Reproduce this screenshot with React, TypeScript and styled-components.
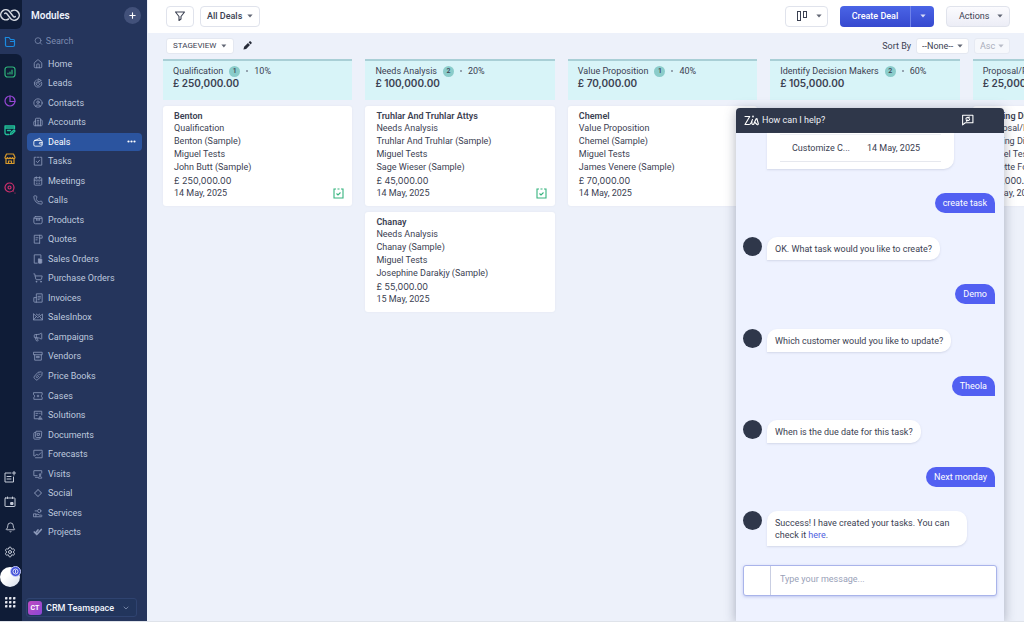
import React from 'react';
import styled, { createGlobalStyle, css } from 'styled-components';
import {
  Bell,
  Building2,
  CalendarDays,
  ChevronDown,
  CircleUser,
  Goal,
  House,
  Megaphone,
  Phone,
  Plus,
  Search,
  Settings,
  ShoppingCart,
} from 'lucide-react';

const GlobalStyle = createGlobalStyle`
  *, *::before, *::after { box-sizing: border-box; }
  body { margin: 0; background: #edf1fa; }
  body, button, input, select {
    font-family: Roboto, 'Liberation Sans', sans-serif;
    font-size: 9px;
    color: #3b4152;
  }
  button { cursor: pointer; }
  ul, ol, h1, h2, h3, p { margin: 0; padding: 0; list-style: none; }
`;

/* ---------- page frame ---------- */

const Page = styled.div`
  display: flex;
  height: 100vh;
  min-height: 560px;
  border-bottom: 1px solid #dfe3ea;
  overflow: hidden;
`;

const Rail = styled.nav`
  flex: none;
  display: flex;
  flex-direction: column;
  width: 22px;
  background: #25355c;
`;

const RailLogo = styled.div`
  display: flex;
  align-items: center;
  justify-content: center;
  height: 29px;
  padding-right: 2px;
  background: #0f1c37;
  border-bottom-right-radius: 6px;
`;

const RailActive = styled.a`
  display: flex;
  align-items: center;
  justify-content: center;
  height: 25px;
  padding-right: 2px;
  color: #1b8ae0;
`;

const RailRest = styled.div`
  flex: 1;
  display: flex;
  flex-direction: column;
  justify-content: space-between;
  padding: 12px 2px 9px 0;
  background: #0f1c37;
  border-top-right-radius: 6px;
`;

const RailGroup = styled.div<{ $gap: number }>`
  display: flex;
  flex-direction: column;
  align-items: center;
  gap: ${(p) => p.$gap}px;
`;

const RailButton = styled.button<{ $size: number; $color: string }>`
  display: flex;
  align-items: center;
  justify-content: center;
  width: 20px;
  height: ${(p) => p.$size}px;
  padding: 0;
  border: 0;
  background: none;
  color: ${(p) => p.$color};
`;

const Avatar = styled.button`
  position: relative;
  width: 20px;
  height: 20px;
  padding: 0;
  border: 0;
  border-radius: 50%;
  background: linear-gradient(135deg, #ffffff 40%, #d3dbea);
`;

const AvatarBadge = styled.span`
  position: absolute;
  top: -1px;
  right: -1px;
  display: flex;
  align-items: center;
  justify-content: center;
  width: 11px;
  height: 11px;
  border: 1px solid #c7cdfa;
  border-radius: 50%;
  background: #4150d8;
`;

/* ---------- module list ---------- */

const Sidebar = styled.aside`
  flex: none;
  display: flex;
  flex-direction: column;
  width: 125px;
  padding-bottom: 4px;
  background: #25355c;
`;

const SidebarHead = styled.header`
  display: flex;
  align-items: center;
  justify-content: space-between;
  height: 30px;
  padding: 0 6px 0 9px;
`;

const SidebarTitle = styled.h1`
  font-size: 10px;
  font-weight: 600;
  color: #eef2fb;
`;

const AddButton = styled.button`
  display: flex;
  align-items: center;
  justify-content: center;
  width: 17px;
  height: 17px;
  padding: 0;
  border: 0;
  border-radius: 50%;
  background: #42517a;
  color: #ffffff;
`;

const SearchField = styled.label`
  display: flex;
  align-items: center;
  gap: 3px;
  height: 24px;
  padding: 0 12px 3px;
  color: #8290b3;
`;

const SearchInput = styled.input`
  width: 100%;
  min-width: 0;
  padding: 0;
  border: 0;
  outline: 0;
  background: none;
  color: #d9e0f0;
  &::placeholder { color: #7c8bb0; opacity: 1; }
`;

const ModuleList = styled.ul`
  flex: 1;
  display: flex;
  flex-direction: column;
  margin-bottom: 56px;
  padding: 0 5px;
`;

const ModuleItem = styled.li`
  flex: 1;
  display: flex;
  align-items: center;
`;

const ModuleLink = styled.a<{ $active: boolean }>`
  flex: 1;
  display: flex;
  align-items: center;
  gap: 5px;
  height: 18px;
  padding: 0 6px;
  border-radius: 4px;
  color: #bfc9de;
  text-decoration: none;
  white-space: nowrap;
  svg { flex: none; color: #8c99b9; }
  ${(p) =>
    p.$active &&
    css`
      background: #2b549f;
      color: #ffffff;
      svg { color: #ffffff; }
    `}
`;

const MoreDots = styled.span`
  display: flex;
  margin-left: auto;
`;

const Teamspace = styled.button`
  display: flex;
  align-items: center;
  gap: 4px;
  height: 19px;
  margin: 0 10px 0 4px;
  padding: 0 6px 0 1px;
  border: 1px solid #2f4370;
  border-radius: 3px;
  background: #22355c;
  color: #f2f5fc;
  font-weight: 500;
  svg { margin-left: auto; color: #9aa7c6; }
`;

const TeamMark = styled.span`
  display: flex;
  align-items: center;
  justify-content: center;
  width: 14px;
  height: 14px;
  border-radius: 3px;
  background: linear-gradient(135deg, #c04bc0, #8b48d6);
  color: #ffffff;
  font-size: 7px;
  font-weight: 700;
`;

/* ---------- toolbars ---------- */

const Main = styled.main`
  position: relative;
  flex: 1;
  min-width: 0;
  display: flex;
  flex-direction: column;
  padding-left: 1px;
  background: #edf1fa;
`;

const TopBar = styled.div`
  display: flex;
  align-items: center;
  gap: 6px;
  height: 33px;
  padding: 0 14px 1px 18px;
  background: #ffffff;
`;

const ViewBar = styled.div`
  display: flex;
  align-items: center;
  gap: 5px;
  height: 26px;
  padding: 0 14px 1px 18px;
`;

const Actions = styled.div`
  display: flex;
  align-items: center;
  gap: 12px;
  margin-left: auto;
`;

const SortGroup = styled.div`
  display: flex;
  align-items: center;
  gap: 5px;
  margin-left: auto;
`;

const ToolButton = styled.button<{ $tinted?: boolean }>`
  display: flex;
  align-items: center;
  justify-content: space-between;
  gap: 5px;
  height: 21px;
  padding: 0 6px;
  border: 1px solid #e0e3ec;
  border-radius: 4px;
  background: ${(p) => (p.$tinted ? 'linear-gradient(#fbfbfe, #ecedf6)' : '#ffffff')};
  font-weight: 500;
`;

const FilterButton = styled(ToolButton)`
  width: 28px;
  justify-content: center;
`;

const LayoutButton = styled(ToolButton)`
  width: 43px;
  padding: 0 5px 0 10px;
`;

const ActionsButton = styled(ToolButton)`
  width: 64px;
  padding: 0 6px 0 12px;
  font-weight: 400;
`;

const ViewButton = styled(ToolButton)`
  width: 68px;
  height: 16px;
  border-color: #e4e8f1;
  border-radius: 3px;
  font-size: 8px;
  font-weight: 400;
`;

const IconButton = styled.button`
  display: flex;
  padding: 4px;
  border: 0;
  background: none;
`;

const SplitButton = styled.div`
  display: flex;
  height: 21px;
  border-radius: 4px;
  background: linear-gradient(#4a64e6, #3649cf);
  overflow: hidden;
`;

const SplitPart = styled.button<{ $width: number }>`
  display: flex;
  align-items: center;
  justify-content: center;
  width: ${(p) => p.$width}px;
  padding: 0;
  border: 0;
  background: none;
  color: #ffffff;
  font-weight: 500;
  & + & { border-left: 1px solid #6f82ea; }
`;

const SortLabel = styled.label`
  font-size: 9px;
`;

const SelectBox = styled.span<{ $width: number; $muted?: boolean }>`
  display: grid;
  align-items: center;
  width: ${(p) => p.$width}px;
  height: 16px;
  border: 1px solid ${(p) => (p.$muted ? '#e6eaf3' : '#e4e8f1')};
  border-radius: 3px;
  background: ${(p) => (p.$muted ? '#f6f8fc' : '#ffffff')};
  color: ${(p) => (p.$muted ? '#a9aebb' : '#3b4152')};
  > * { grid-area: 1 / 1; }
  > svg { justify-self: end; margin-right: 5px; pointer-events: none; }
`;

const Select = styled.select`
  appearance: none;
  width: 100%;
  height: 14px;
  padding: 0 0 0 5px;
  border: 0;
  background: none;
  color: inherit;
  font-size: 9px;
  opacity: 1;
`;

/* ---------- deals board ---------- */

const Board = styled.div`
  flex: 1;
  display: flex;
  gap: 13px;
  min-height: 0;
  padding-left: 15px;
  overflow: hidden;
`;

const Column = styled.section`
  flex: 0 0 22%;
  display: flex;
  flex-direction: column;
  gap: 6px;
`;

const StageHead = styled.header`
  padding: 4px 10px 10px;
  border-top: 2px solid #a9cfd6;
  background: #d8f4f8;
`;

const StageLine = styled.div`
  display: flex;
  align-items: center;
  gap: 6px;
  height: 12px;
  white-space: nowrap;
`;

const StageName = styled.h2`
  font-size: 9px;
  font-weight: 400;
`;

const StageCount = styled.span`
  display: flex;
  align-items: center;
  justify-content: center;
  width: 11px;
  height: 11px;
  border-radius: 50%;
  background: #8accca;
  font-size: 7px;
  font-weight: 500;
`;

const Dot = styled.span`
  width: 2px;
  height: 2px;
  border-radius: 50%;
  background: #7f8a99;
`;

const StageTotal = styled.p`
  line-height: 13px;
  font-family: Inter, Roboto, sans-serif;
  font-size: 10px;
  font-weight: 600;
  color: #3b4152;
  white-space: nowrap;
`;

const Card = styled.article`
  padding: 4px 8px 6px 11px;
  border-radius: 3px;
  background: #ffffff;
  box-shadow: 0 0 2px #cfd6e466;
  line-height: 13px;
  white-space: nowrap;
`;

const CardTitle = styled.h3`
  line-height: 12px;
  font-size: 9px;
  font-weight: 600;
`;

const CardAmount = styled.p`
  font-family: Inter, Roboto, sans-serif;
`;

const CardFoot = styled.footer`
  display: flex;
  align-items: center;
  justify-content: space-between;
  height: 13px;
`;

/* ---------- assistant panel ---------- */

const Chat = styled.aside`
  position: absolute;
  top: 108px;
  right: 20px;
  bottom: 0;
  display: flex;
  flex-direction: column;
  width: 268px;
  border-radius: 4px 4px 0 0;
  background: #eef2ff;
  box-shadow: 0 2px 12px #3a425c66;
  overflow: hidden;
`;

const ChatHead = styled.header`
  flex: none;
  display: flex;
  align-items: center;
  gap: 3px;
  height: 25px;
  padding: 0 30px 2px 8px;
  background: #2f374a;
  color: #ffffff;
`;

const ChatTitle = styled.h2`
  flex: 1;
  font-size: 9px;
  font-weight: 400;
  color: #eef0f6;
`;

const ChatTool = styled.button`
  display: flex;
  padding: 0;
  border: 0;
  background: none;
  color: #ffffff;
`;

const Messages = styled.ol`
  flex: 1;
  display: flex;
  flex-direction: column;
  justify-content: space-between;
  min-height: 0;
  padding: 0 9px 0 7px;
`;

const BotMessage = styled.li`
  display: flex;
  align-items: flex-start;
  gap: 5px;
`;

const BotFace = styled.span`
  flex: none;
  width: 19px;
  height: 19px;
  border-radius: 50%;
  background: #2f374a;
`;

const BotBubble = styled.p`
  max-width: 200px;
  padding: 6px 8px 5px;
  border-radius: 10px 10px 10px 0;
  background: #ffffff;
  box-shadow: 0 1px 2px #b9c0d680;
  line-height: 12px;
`;

const UserMessage = styled.li`
  align-self: flex-end;
  padding: 4px 8px;
  border-radius: 10px 10px 0 10px;
  background: #5260f2;
  color: #ffffff;
  line-height: 12px;
`;

const TaskListMessage = styled.li`
  width: 187px;
  margin-left: 24px;
  padding: 1px 13px 7px;
  border-radius: 0 0 10px 0;
  background: #ffffff;
  box-shadow: 0 1px 2px #b9c0d680;
`;

const TaskTable = styled.table`
  width: 100%;
  border-collapse: collapse;
  td {
    height: 27px;
    padding: 0 0 0 12px;
    border-top: 1px solid #eef0f4;
    border-bottom: 1px solid #e6e8ee;
  }
  td:first-child { width: 75px; }
`;

const ChatLink = styled.a`
  color: #4f5de0;
  text-decoration: none;
`;

const Composer = styled.form`
  flex: none;
  display: flex;
  height: 31px;
  margin: 19px 7px 25px;
  border: 1px solid #a9b4ea;
  border-radius: 3px;
  background: #ffffff;
  box-shadow: 0 1px 3px #8f9be080;
`;

const ComposerSlot = styled.span`
  width: 27px;
  border-right: 1px solid #c9cee2;
`;

const ComposerInput = styled.input`
  flex: 1;
  min-width: 0;
  padding: 0 9px 3px;
  border: 0;
  outline: 0;
  background: none;
  &::placeholder { color: #99a1b8; opacity: 1; }
`;

/* ---------- drawings ---------- */

const Caret = () => (
  <svg width="6" height="4" viewBox="0 0 6 4" fill="currentColor" opacity="0.8" aria-hidden="true">
    <path d="M0.4 0.4h5.2L3 3.6z" />
  </svg>
);

const Glyph = ({ children, size = 10, weight = 2 }: { children: React.ReactNode; size?: number; weight?: number }) => (
  <svg
    width={size}
    height={size}
    viewBox="0 0 24 24"
    fill="none"
    stroke="currentColor"
    strokeWidth={weight}
    strokeLinecap="round"
    strokeLinejoin="round"
    aria-hidden="true"
  >
    {children}
  </svg>
);

const BrandMark = () => (
  <svg width="20" height="14" viewBox="0 0 40 28" fill="none" stroke="#d5d9e2" strokeWidth="3" strokeLinecap="round">
    <path d="M17 22A10 10 0 1 1 19 7L27 17.500Q29 19 30.500 17" />
    <path d="M23 6A10 10 0 1 1 21 21L13 10.500Q11 9 9.500 11" />
  </svg>
);

const ZiaMark = () => (
  <svg width="15" height="12" viewBox="0 0 30 24" fill="none" stroke="#ffffff" strokeWidth="2.200" strokeLinecap="round" strokeLinejoin="round">
    <path d="M2 5h9.500L2 21h8c2 0 3-1 4-3l3-7" />
    <circle cx="18" cy="5" r="0.700" fill="#ffffff" />
    <path d="M16 16c-1 3 0 5 2 5 1 0 2-1 2-2l4-9c1-1 2-1 2 0l2.500 9c.5 2-1 3-2.500 2l-5-5" />
  </svg>
);

const WalletGlyph = () => (
  <Glyph>
    <path d="M4 9l12-6 2 5" />
    <rect x="2" y="8" width="20" height="14" rx="3" />
    <path d="M22 13h-5a2 2 0 0 0 0 4h5" />
  </Glyph>
);

const TaskGlyph = () => (
  <Glyph>
    <path d="M7 3H3v19h18V3h-4M10 3h4M8 13l3 3 5-6" />
  </Glyph>
);

const glyphs = {
  box: (
    <Glyph>
      <rect x="2" y="4" width="20" height="17" rx="4" />
      <path d="M3 8h18M8 12h8M9 8v4M15 8v4" />
    </Glyph>
  ),
  quote: (
    <Glyph>
      <path d="M16 22H3V3h17a2 2 0 0 1 2 2v5h-6M16 3v19M7 9h5M7 14h3" />
    </Glyph>
  ),
  order: (
    <Glyph>
      <path d="M10 22H3V2h16v7" />
      <rect x="13" y="12" width="8" height="10" rx="1" fill="currentColor" />
    </Glyph>
  ),
  invoice: (
    <Glyph>
      <path d="M8 22V2h14v20H4a2 2 0 0 1-2-2v-9h6M12 8h6M12 12h6M12 16h3" />
    </Glyph>
  ),
  inbox: (
    <Glyph>
      <path d="M1 5v14h22V5l-11 8zM1 19l7-8M23 19l-7-8M8 5l4 3 4-3" />
    </Glyph>
  ),
  vendor: (
    <Glyph>
      <path d="M2 3h20v6H2zM4 9v13h16V9M9 13h6v3H9z" />
    </Glyph>
  ),
  price: (
    <Glyph>
      <path d="M13 3l7-1 2 2-1 7-10 10a3 3 0 0 1-4 0l-4-4a3 3 0 0 1 0-4z" />
      <path d="M15 7l2 2M12 9l-4 4c-1 1 0 3 2 3l4-4" />
    </Glyph>
  ),
  ticket: (
    <Glyph>
      <path d="M2 4h20v5c-3 1-3 5 0 6v5H2v-5c3-1 3-5 0-6zM12 10v4M10 12h4" />
    </Glyph>
  ),
  solution: (
    <Glyph>
      <path d="M11 21H3V3h18v9M7 8h5M16 8h1M7 13h3M14 20l3-5 3 5zM13 22h9" />
    </Glyph>
  ),
  documents: (
    <Glyph>
      <path d="M8 3h11a2 2 0 0 1 2 2l-1 11a2 2 0 0 1-2 2H8a2 2 0 0 1-2-2zM6 6H4a2 2 0 0 0-2 2v12a2 2 0 0 0 2 2h11a2 2 0 0 0 2-2v-2M11 8h5l-1 5h-4z" />
    </Glyph>
  ),
  forecast: (
    <Glyph>
      <path d="M2 16V3h20v18H6M3 17l6-4 4 2 6-6" />
    </Glyph>
  ),
  visit: (
    <Glyph>
      <path d="M21 10V4H2v12h8M6 20h5M17 12a2 2 0 1 1 0 4 2 2 0 0 1 0-4zM13 21c0-5 8-5 8 0z" />
    </Glyph>
  ),
  social: (
    <Glyph>
      <path d="M9 7a3 3 0 1 1 6 0l2 2a3 3 0 1 1 0 6l-2 2a3 3 0 1 1-6 0l-2-2a3 3 0 1 1 0-6z" />
    </Glyph>
  ),
  service: (
    <Glyph>
      <circle cx="15" cy="7" r="4" />
      <path d="M2 14h5v7H2zM7 15h5l3 2h5c2 0 2 4 0 4H7M5 7h4" />
    </Glyph>
  ),
  project: (
    <Glyph weight={4}>
      <path d="M3 12l6 6L20 6M12 7l-4 5" />
    </Glyph>
  ),
};

/* ---------- data ---------- */

const icon = { size: 10, strokeWidth: 2, 'aria-hidden': true } as const;

const modules: { name: string; glyph: React.ReactNode }[] = [
  { name: 'Home', glyph: <House {...icon} /> },
  { name: 'Leads', glyph: <Goal {...icon} /> },
  { name: 'Contacts', glyph: <CircleUser {...icon} /> },
  { name: 'Accounts', glyph: <Building2 {...icon} /> },
  { name: 'Deals', glyph: <WalletGlyph /> },
  { name: 'Tasks', glyph: <TaskGlyph /> },
  { name: 'Meetings', glyph: <CalendarDays {...icon} /> },
  { name: 'Calls', glyph: <Phone {...icon} /> },
  { name: 'Products', glyph: glyphs.box },
  { name: 'Quotes', glyph: glyphs.quote },
  { name: 'Sales Orders', glyph: glyphs.order },
  { name: 'Purchase Orders', glyph: <ShoppingCart {...icon} /> },
  { name: 'Invoices', glyph: glyphs.invoice },
  { name: 'SalesInbox', glyph: glyphs.inbox },
  { name: 'Campaigns', glyph: <Megaphone {...icon} /> },
  { name: 'Vendors', glyph: glyphs.vendor },
  { name: 'Price Books', glyph: glyphs.price },
  { name: 'Cases', glyph: glyphs.ticket },
  { name: 'Solutions', glyph: glyphs.solution },
  { name: 'Documents', glyph: glyphs.documents },
  { name: 'Forecasts', glyph: glyphs.forecast },
  { name: 'Visits', glyph: glyphs.visit },
  { name: 'Social', glyph: glyphs.social },
  { name: 'Services', glyph: glyphs.service },
  { name: 'Projects', glyph: glyphs.project },
];

interface Deal {
  title: string;
  account: string;
  contact: string;
  amount: string;
  date: string;
  hasTask?: boolean;
}

interface Stage {
  name: string;
  count?: number;
  chance?: string;
  total: string;
  deals: Deal[];
}

const stages: Stage[] = [
  {
    name: 'Qualification',
    count: 1,
    chance: '10%',
    total: '£ 250,000.00',
    deals: [
      { title: 'Benton', account: 'Benton (Sample)', contact: 'John Butt (Sample)', amount: '£ 250,000.00', date: '14 May, 2025', hasTask: true },
    ],
  },
  {
    name: 'Needs Analysis',
    count: 2,
    chance: '20%',
    total: '£ 100,000.00',
    deals: [
      { title: 'Truhlar And Truhlar Attys', account: 'Truhlar And Truhlar (Sample)', contact: 'Sage Wieser (Sample)', amount: '£ 45,000.00', date: '14 May, 2025', hasTask: true },
      { title: 'Chanay', account: 'Chanay (Sample)', contact: 'Josephine Darakjy (Sample)', amount: '£ 55,000.00', date: '15 May, 2025' },
    ],
  },
  {
    name: 'Value Proposition',
    count: 1,
    chance: '40%',
    total: '£ 70,000.00',
    deals: [
      { title: 'Chemel', account: 'Chemel (Sample)', contact: 'James Venere (Sample)', amount: '£ 70,000.00', date: '14 May, 2025' },
    ],
  },
  { name: 'Identify Decision Makers', count: 2, chance: '60%', total: '£ 105,000.00', deals: [] },
  {
    name: 'Proposal/Price Quote',
    total: '£ 25,000.00',
    deals: [
      { title: 'Printing Dimensions', account: 'Printing Dimensions', contact: 'Donette Foller (Sample)', amount: '£ 25,000.00', date: '14 May, 2025' },
    ],
  },
];

const DealCard = ({ deal, stage }: { deal: Deal; stage: string }) => (
  <Card>
    <CardTitle>{deal.title}</CardTitle>
    <p>{stage}</p>
    <p>{deal.account}</p>
    <p>Miguel Tests</p>
    <p>{deal.contact}</p>
    <CardAmount>{deal.amount}</CardAmount>
    <CardFoot>
      <time>{deal.date}</time>
      {deal.hasTask && (
        <svg width="11" height="11" viewBox="0 0 22 22" fill="none" stroke="#36b37e" strokeWidth="2.200" aria-label="Open task">
          <path d="M6 2H2v18h18V2h-4M9 2h4M7 11l3 3 5-5" />
        </svg>
      )}
    </CardFoot>
  </Card>
);

const Bot = ({ children }: { children: React.ReactNode }) => (
  <BotMessage>
    <BotFace />
    <BotBubble>{children}</BotBubble>
  </BotMessage>
);

export default function App() {
  return (
    <>
      <GlobalStyle />
      <Page>
        <Rail aria-label="Workspaces">
          <RailLogo>
            <BrandMark />
          </RailLogo>
          <RailActive href="#modules" aria-label="Modules">
            <Glyph size={12} weight={2.4}>
              <path d="M3 5v13a3 3 0 0 0 3 3h12a3 3 0 0 0 3-3V9a2 2 0 0 0-2-2h-6l-3-4H4a1 1 0 0 0-1 2zM13 11h8" />
            </Glyph>
          </RailActive>
          <RailRest>
            <RailGroup $gap={17}>
              <RailButton $size={12} $color="#2fb57c" aria-label="Reports">
                <Glyph size={12} weight={2.4}>
                  <rect x="2" y="2" width="20" height="20" rx="5" />
                  <path d="M8 16v-2M12 16v-4M16 16V8" />
                </Glyph>
              </RailButton>
              <RailButton $size={12} $color="#9747d6" aria-label="Analytics">
                <Glyph size={12} weight={2.4}>
                  <circle cx="12" cy="12" r="10" />
                  <path d="M12 2v11h10" />
                </Glyph>
              </RailButton>
              <RailButton $size={12} $color="#21c29b" aria-label="My jobs">
                <Glyph size={12} weight={2.6}>
                  <path d="M10 21H5a3 3 0 0 1-3-3V4h19v5M2 8h19M7 13h6M13 21l1-4 6-5 2 2-6 6z" />
                </Glyph>
              </RailButton>
              <RailButton $size={12} $color="#d99a2b" aria-label="Marketplace">
                <Glyph size={12} weight={2.4}>
                  <path d="M5 2h14l3 7c0 3-4 3-5 0-1 3-4 3-5 0-1 3-4 3-5 0-1 3-5 3-5 0zM4 12v9h16v-9M9 21v-5h6v5" />
                </Glyph>
              </RailButton>
              <RailButton $size={12} $color="#d3306e" aria-label="Discover">
                <Glyph size={12} weight={2.4}>
                  <circle cx="11" cy="11" r="9" />
                  <circle cx="11" cy="11" r="3" />
                  <path d="M18 18h1M22 22h0" />
                </Glyph>
              </RailButton>
            </RailGroup>
            <RailGroup $gap={5}>
              <RailButton $size={20} $color="#c5cbd8" aria-label="New note">
                <Glyph size={12}>
                  <path d="M14 4H2v18h17V12M6 11h8M6 16h8M20 1v7M17 4h6" />
                </Glyph>
              </RailButton>
              <RailButton $size={20} $color="#c5cbd8" aria-label="Calendar">
                <Glyph size={12}>
                  <rect x="2" y="4" width="20" height="17" rx="1" />
                  <path d="M7 2v3M17 2v3" />
                  <rect x="14" y="13" width="4" height="4" fill="currentColor" />
                </Glyph>
              </RailButton>
              <RailButton $size={20} $color="#c5cbd8" aria-label="Notifications">
                <Bell size={11} />
              </RailButton>
              <RailButton $size={20} $color="#c5cbd8" aria-label="Settings">
                <Settings size={12} />
              </RailButton>
              <Avatar aria-label="Profile">
                <AvatarBadge>
                  <svg width="7" height="7" viewBox="0 0 14 14" fill="none" stroke="#ffffff" strokeWidth="1.600">
                    <circle cx="7" cy="7" r="5" />
                    <path d="M7 4v6" />
                  </svg>
                </AvatarBadge>
              </Avatar>
              <RailButton $size={20} $color="#e3e6ee" aria-label="All apps">
                <svg width="11" height="11" viewBox="0 0 11 11" fill="currentColor">
                  {[0, 4, 8].map((y) =>
                    [0, 4, 8].map((x) => <rect key={`${x}-${y}`} x={x} y={y} width="2.400" height="2.400" rx="0.400" />),
                  )}
                </svg>
              </RailButton>
            </RailGroup>
          </RailRest>
        </Rail>

        <Sidebar>
          <SidebarHead>
            <SidebarTitle>Modules</SidebarTitle>
            <AddButton aria-label="Add module">
              <Plus size={9} strokeWidth={3} />
            </AddButton>
          </SidebarHead>
          <SearchField>
            <Search size={10} />
            <SearchInput type="search" placeholder="Search" aria-label="Search modules" />
          </SearchField>
          <ModuleList>
            {modules.map((m) => {
              const active = m.name === 'Deals';
              return (
                <ModuleItem key={m.name}>
                  <ModuleLink href={`#${m.name}`} $active={active}>
                    {m.glyph}
                    {m.name}
                    {active && (
                      <MoreDots>
                        <svg width="9" height="3" viewBox="0 0 9 3" fill="currentColor">
                          <circle cx="1.500" cy="1.500" r="1.100" />
                          <circle cx="4.500" cy="1.500" r="1.100" />
                          <circle cx="7.500" cy="1.500" r="1.100" />
                        </svg>
                      </MoreDots>
                    )}
                  </ModuleLink>
                </ModuleItem>
              );
            })}
          </ModuleList>
          <Teamspace>
            <TeamMark>CT</TeamMark>
            CRM Teamspace
            <ChevronDown size={8} />
          </Teamspace>
        </Sidebar>

        <Main>
          <TopBar>
            <FilterButton aria-label="Filter">
              <Glyph size={12} weight={2.2}>
                <path d="M3 4h18l-7 9v5l-4 3v-8z" />
              </Glyph>
            </FilterButton>
            <ToolButton>
              All Deals
              <Caret />
            </ToolButton>
            <Actions>
              <LayoutButton aria-label="Board layout">
                <svg width="12" height="10" viewBox="0 0 12 10" fill="none" stroke="currentColor" strokeWidth="1">
                  <rect x="1.500" y="0.500" width="3" height="9" />
                  <rect x="7.500" y="0.500" width="3" height="6" />
                </svg>
                <Caret />
              </LayoutButton>
              <SplitButton>
                <SplitPart $width={70}>Create Deal</SplitPart>
                <SplitPart $width={24} aria-label="More create options">
                  <Caret />
                </SplitPart>
              </SplitButton>
              <ActionsButton $tinted>
                Actions
                <Caret />
              </ActionsButton>
            </Actions>
          </TopBar>

          <ViewBar>
            <ViewButton>
              STAGEVIEW
              <Caret />
            </ViewButton>
            <IconButton aria-label="Edit view">
              <svg width="9" height="9" viewBox="0 0 20 20" fill="#262b38">
                <path d="M1 19l1.500-6L11 4.500l4.500 4.500L7 17.500zM12.500 3L15 .8c.6-.5 1.300-.5 1.800 0l2.400 2.400c.5.500.5 1.200 0 1.800L17 7.500z" />
              </svg>
            </IconButton>
            <SortGroup>
              <SortLabel htmlFor="sort-field">Sort By</SortLabel>
              <SelectBox $width={53}>
                <Select id="sort-field">
                  <option>--None--</option>
                </Select>
                <Caret />
              </SelectBox>
              <SelectBox $width={36} $muted>
                <Select aria-label="Sort direction" disabled>
                  <option>Asc</option>
                </Select>
                <Caret />
              </SelectBox>
            </SortGroup>
          </ViewBar>

          <Board>
            {stages.map((s) => (
              <Column key={s.name}>
                <StageHead>
                  <StageLine>
                    <StageName>{s.name}</StageName>
                    {s.count && <StageCount>{s.count}</StageCount>}
                    {s.chance && <Dot />}
                    {s.chance && <span>{s.chance}</span>}
                  </StageLine>
                  <StageTotal>{s.total}</StageTotal>
                </StageHead>
                {s.deals.map((d) => (
                  <DealCard key={d.title} deal={d} stage={s.name} />
                ))}
              </Column>
            ))}
          </Board>

          <Chat aria-label="Zia assistant">
            <ChatHead>
              <ZiaMark />
              <ChatTitle>How can I help?</ChatTitle>
              <ChatTool aria-label="Restart conversation">
                <Glyph size={13}>
                  <path d="M3 22V4h19v14H8zM9 11c0-3 4-4 6-2M16 11c0 3-4 4-6 2M15 7v2h-2M10 15v-2h2" />
                </Glyph>
              </ChatTool>
            </ChatHead>
            <Messages>
              <TaskListMessage>
                <TaskTable>
                  <tbody>
                    <tr>
                      <td>Customize C...</td>
                      <td>14 May, 2025</td>
                    </tr>
                  </tbody>
                </TaskTable>
              </TaskListMessage>
              <UserMessage>create task</UserMessage>
              <Bot>OK. What task would you like to create?</Bot>
              <UserMessage>Demo</UserMessage>
              <Bot>Which customer would you like to update?</Bot>
              <UserMessage>Theola</UserMessage>
              <Bot>When is the due date for this task?</Bot>
              <UserMessage>Next monday</UserMessage>
              <Bot>
                Success! I have created your tasks. You can check it <ChatLink href="#tasks">here</ChatLink>.
              </Bot>
            </Messages>
            <Composer onSubmit={(e) => e.preventDefault()}>
              <ComposerSlot />
              <ComposerInput placeholder="Type your message..." aria-label="Type your message" />
            </Composer>
          </Chat>
        </Main>
      </Page>
    </>
  );
}
